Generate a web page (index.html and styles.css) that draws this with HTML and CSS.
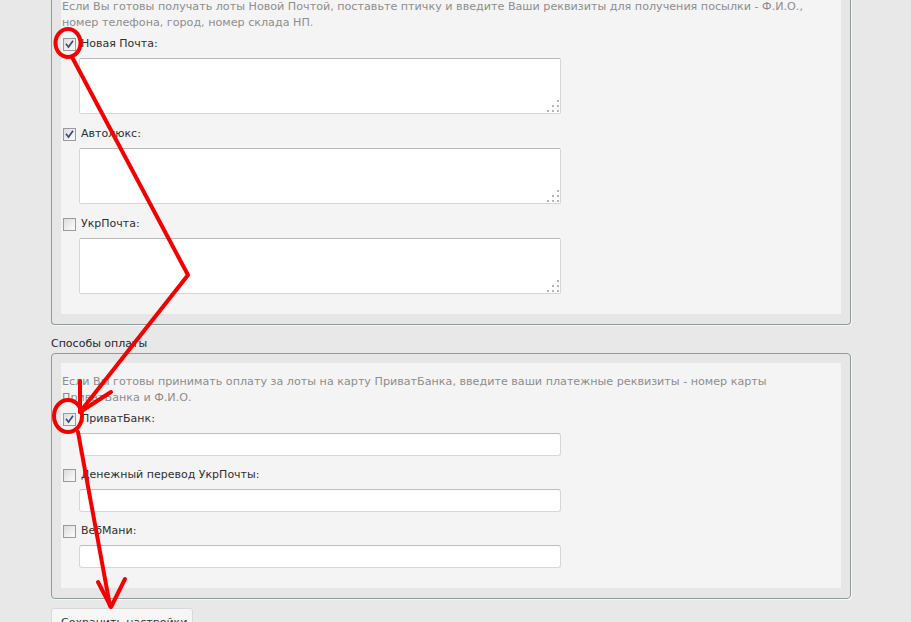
FILE: index.html
```html
<!DOCTYPE html>
<html lang="ru">
<head>
<meta charset="utf-8">
<title>Настройки</title>
<link rel="stylesheet" href="styles.css">
</head>
<body>
<div class="page">
  <div class="fs fs-top">
    <div class="fs-inner">
      <p class="desc">Если Вы готовы получать лоты Новой Почтой, поставьте птичку и введите Ваши реквизиты для получения посылки - Ф.И.О., номер телефона, город, номер склада НП.</p>
      <div class="item">
        <label class="opt"><span class="cb"><svg viewBox="0 0 11 11" width="11" height="11"><path d="M2.5 5.5 L4.5 8 L8.5 2.5"/></svg></span>Новая Почта:</label>
        <div class="ta-wrap"><textarea class="ta"></textarea><svg class="grip" viewBox="0 0 14 14" width="14" height="14"><rect x="11" y="1" width="2" height="2"/><rect x="6" y="6" width="2" height="2"/><rect x="11" y="6" width="2" height="2"/><rect x="1" y="11" width="2" height="2"/><rect x="6" y="11" width="2" height="2"/><rect x="11" y="11" width="2" height="2"/></svg></div>
      </div>
      <div class="item">
        <label class="opt"><span class="cb"><svg viewBox="0 0 11 11" width="11" height="11"><path d="M2.5 5.5 L4.5 8 L8.5 2.5"/></svg></span>Автолюкс:</label>
        <div class="ta-wrap"><textarea class="ta"></textarea><svg class="grip" viewBox="0 0 14 14" width="14" height="14"><rect x="11" y="1" width="2" height="2"/><rect x="6" y="6" width="2" height="2"/><rect x="11" y="6" width="2" height="2"/><rect x="1" y="11" width="2" height="2"/><rect x="6" y="11" width="2" height="2"/><rect x="11" y="11" width="2" height="2"/></svg></div>
      </div>
      <div class="item">
        <label class="opt"><span class="cb"></span>УкрПочта:</label>
        <div class="ta-wrap"><textarea class="ta"></textarea><svg class="grip" viewBox="0 0 14 14" width="14" height="14"><rect x="11" y="1" width="2" height="2"/><rect x="6" y="6" width="2" height="2"/><rect x="11" y="6" width="2" height="2"/><rect x="1" y="11" width="2" height="2"/><rect x="6" y="11" width="2" height="2"/><rect x="11" y="11" width="2" height="2"/></svg></div>
      </div>
    </div>
  </div>

  <div class="legend">Способы оплаты</div>

  <div class="fs fs-pay">
    <div class="fs-inner">
      <p class="desc">Если Вы готовы принимать оплату за лоты на карту ПриватБанка, введите ваши платежные реквизиты - номер карты ПриватБанка и Ф.И.О.</p>
      <div class="item">
        <label class="opt"><span class="cb"><svg viewBox="0 0 11 11" width="11" height="11"><path d="M2.5 5.5 L4.5 8 L8.5 2.5"/></svg></span>ПриватБанк:</label>
        <input class="inp" type="text">
      </div>
      <div class="item">
        <label class="opt"><span class="cb"></span>Денежный перевод УкрПочты:</label>
        <input class="inp" type="text">
      </div>
      <div class="item">
        <label class="opt"><span class="cb"></span>ВебМани:</label>
        <input class="inp" type="text">
      </div>
    </div>
  </div>

  <button class="save" type="button">Сохранить настройки</button>
</div>

<svg class="marks" viewBox="0 0 911 622" width="911" height="622">
  <ellipse cx="68" cy="43" rx="12.5" ry="14"/>
  <path d="M72 57 L188 275 L80 412"/>
  <path d="M80 381 L80 412 L111 392"/>
  <ellipse cx="68" cy="416" rx="14" ry="16"/>
  <path d="M78 432 L110 606"/>
  <path d="M98 582 L111 607 L125 579"/>
</svg>
</body>
</html>
```
FILE: styles.css
```css
html, body {
  margin: 0;
  padding: 0;
}

body {
  background: #e8e8e8;
  font-family: "DejaVu Sans", Verdana, sans-serif;
  font-size: 11px;
  color: #333;
  overflow: hidden;
  position: relative;
  width: 911px;
  height: 622px;
}

.page {
  padding-left: 51px;
  width: 800px;
}

.fs {
  border: 1px solid #8e9c97;
  border-radius: 4px;
  background: #e6e6e6;
  padding: 9px 9px 10px 9px;
  box-shadow: 1px 1px 0 #f7f7f7;
}

.fs-top {
  border-top: none;
  border-top-left-radius: 0;
  border-top-right-radius: 0;
  padding-top: 0;
  margin-top: -1px;
}

.fs-inner {
  background: #f4f4f4;
  padding: 11px 0 10px 1px;
}

.fs-top .fs-inner {
  padding-top: 0;
  padding-bottom: 9px;
}

.desc {
  margin: 0 0 4px 0;
  font-size: 11.15px;
  line-height: 16px;
  color: #8d8d8d;
}

.item {
  margin-bottom: 10px;
}

.fs-top .item {
  margin-bottom: 11px;
}

.opt {
  display: flex;
  align-items: center;
  height: 18px;
  line-height: 18px;
  color: #2f2f2f;
}

.cb {
  box-sizing: border-box;
  width: 13px;
  height: 13px;
  margin: 0 5px 0 1px;
  border: 1px solid #9a9a9a;
  background: linear-gradient(135deg, #dcdcdc 0%, #f0f0f0 60%, #fbfbfb 100%);
  display: flex;
  align-items: center;
  justify-content: center;
}

.cb svg {
  display: block;
}

.cb path {
  fill: none;
  stroke: #3c4a7c;
  stroke-width: 1.7;
  stroke-linecap: square;
}

.ta-wrap {
  position: relative;
  width: 482px;
  margin: 5px 0 0 17px;
}

.ta {
  display: block;
  box-sizing: border-box;
  width: 482px;
  height: 56px;
  margin: 0;
  background: #fff;
  border: 1px solid #d6d6d6;
  border-top-color: #b9b9b9;
  border-radius: 2px;
  resize: none;
  font-family: inherit;
  font-size: 11px;
}

.grip {
  position: absolute;
  right: 1px;
  bottom: 1px;
  fill: #b4b4b4;
}

.inp {
  display: block;
  box-sizing: border-box;
  width: 482px;
  height: 23px;
  margin: 5px 0 0 17px;
  padding: 0;
  background: #fff;
  border: 1px solid #d6d6d6;
  border-top-color: #bdbdbd;
  border-radius: 3px;
  font-family: inherit;
  font-size: 11px;
}

.legend {
  margin: 11px 0 1px 0;
  line-height: 16px;
  color: #262626;
}

.save {
  margin-top: 9px;
  padding: 6px 5px 6px 9px;
  background: #f6f6f6;
  border: 1px solid #d8d8d8;
  border-radius: 3px;
  font-family: inherit;
  font-size: 11px;
  color: #333;
  line-height: 16px;
}

.marks {
  position: absolute;
  left: 0;
  top: 0;
  pointer-events: none;
  fill: none;
  stroke: #f40000;
  stroke-width: 4;
  stroke-linecap: round;
  stroke-linejoin: round;
}
```
